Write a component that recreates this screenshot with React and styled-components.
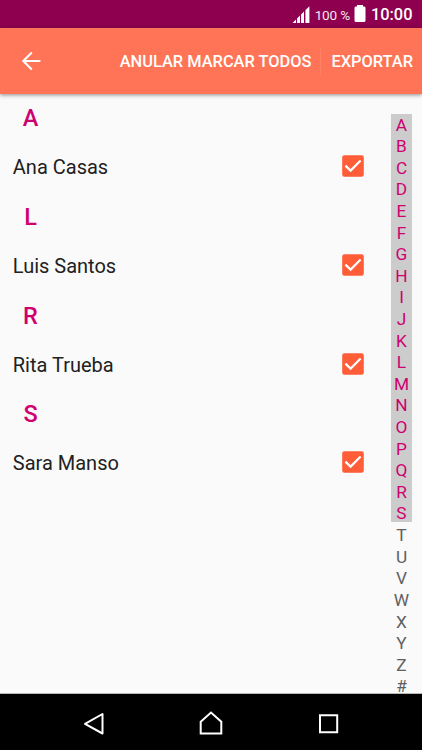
import React from "react";
import styled, { createGlobalStyle } from "styled-components";

const GlobalStyle = createGlobalStyle`
  * {
    box-sizing: border-box;
  }

  body {
    margin: 0;
    background: #fafafa;
    font-family: Roboto, sans-serif;
  }
`;

const Screen = styled.div`
  display: flex;
  flex-direction: column;
  width: 422px;
  height: 750px;
  overflow: hidden;
  background: #fafafa;
`;

const StatusBar = styled.div`
  display: flex;
  flex: none;
  align-items: center;
  justify-content: flex-end;
  height: 28px;
  padding-right: 9.5px;
  color: white;
  background: #8e004f;
`;

const Percent = styled.span`
  margin: 2px 4px 0 5px;
  font-size: 13.6px;
  line-height: 16px;
  letter-spacing: -0.2px;
  opacity: 0.9;
`;

const Clock = styled.span`
  margin: 2px 0 0 5px;
  font-size: 16.4px;
  font-weight: 500;
  line-height: 20px;
`;

const AppBar = styled.header`
  display: flex;
  flex: none;
  align-items: center;
  height: 66px;
  padding: 0 9px 0 20.5px;
  color: white;
  background: #ff7456;
  box-shadow: 0 1px 4px rgba(0, 0, 0, 0.45);
  z-index: 1;
`;

const BarButton = styled.button`
  padding: 2px 0 0;
  border: 0;
  color: inherit;
  background: none;
  font: 500 16.4px/20px Roboto, sans-serif;
  white-space: nowrap;
`;

const BackButton = styled(BarButton)`
  display: flex;
  margin-right: auto;
  padding: 0;
`;

const Divider = styled.div`
  width: 1px;
  height: 28px;
  margin: 0 10px 0 9px;
  background: #ff8166;
`;

const Content = styled.main`
  display: flex;
  flex: 1;
  min-height: 0;
  overflow: hidden;
  border-bottom: 1px solid #b8b8b8;
`;

const Contacts = styled.div`
  flex: 1;
`;

const Group = styled.section`
  height: 98.8px;
`;

const Letter = styled.h2`
  width: 61px;
  height: 48px;
  margin: 0;
  color: #cf0070;
  font-size: 23.5px;
  font-weight: 500;
  line-height: 48px;
  text-align: center;
`;

const Contact = styled.div`
  display: flex;
  align-items: center;
  justify-content: space-between;
  height: 49px;
  padding: 0 27px 0 12.8px;
  color: #212121;
  font-size: 20px;
`;

const Name = styled.span`
  padding-top: 1px;
  line-height: 24px;
`;

const Index = styled.nav`
  flex: none;
  width: 21px;
  margin: 19.5px 10px 0 0;
  color: #606060;
  background: linear-gradient(#cccccc 408.5px, transparent 408.5px);
`;

const IndexLetter = styled.div`
  height: 21.62px;
  color: ${(props) => (props.$active ? "#cf0070" : "inherit")};
  font-size: 17.3px;
  line-height: 22.5px;
  text-align: center;

  &:last-child {
    height: 17.3px;
  }
`;

const NavBar = styled.footer`
  display: flex;
  flex: none;
  align-items: center;
  justify-content: space-between;
  height: 56px;
  padding: 0 81px;
  background: black;
`;

const Signal = () => (
  <svg width="18" height="18" viewBox="0 0 18 18" fill="white">
    <path d="M0 18.5 4 14.6V18.5ZM5 13.6 8 10.6V18.5H5ZM9 9.6 12 6.6V18.5H9ZM13.4 5.2 17.4 1.2V18.5H13.4Z" />
  </svg>
);

const Battery = () => (
  <svg width="12" height="18" viewBox="0 0 12 18" fill="white">
    <path d="M3 0H9V1.5H10.5L11.5 2.5V16L10.5 17H1.5L.5 16V2.5L1.5 1.5H3Z" />
  </svg>
);

const BackArrow = () => (
  <svg width="20" height="20" viewBox="0 0 20 20" fill="none" stroke="white" strokeWidth="2.1">
    <path d="M10.8 1.6 2.3 10 10.8 18.4M2 10H19.4" />
  </svg>
);

const CheckIcon = styled.svg`
  margin-bottom: 1px;
`;

const Check = () => (
  <CheckIcon width="22" height="22" viewBox="0 0 22 22" fill="none">
    <rect x=".2" y=".2" width="21.6" height="21.6" rx="2.2" fill="#ff5c38" />
    <path d="M3.4 10.6 8.6 15.6 18.6 5.4" stroke="white" strokeWidth="2.2" />
  </CheckIcon>
);

const groups = [
  { letter: "A", name: "Ana Casas" },
  { letter: "L", name: "Luis Santos" },
  { letter: "R", name: "Rita Trueba" },
  { letter: "S", name: "Sara Manso" },
];

const letters = "ABCDEFGHIJKLMNOPQRSTUVWXYZ#".split("");

export default () => {
  return (
    <Screen>
      <GlobalStyle />
      <StatusBar>
        <Signal />
        <Percent>100 %</Percent>
        <Battery />
        <Clock>10:00</Clock>
      </StatusBar>
      <AppBar>
        <BackButton aria-label="Atrás">
          <BackArrow />
        </BackButton>
        <BarButton>ANULAR MARCAR TODOS</BarButton>
        <Divider />
        <BarButton>EXPORTAR</BarButton>
      </AppBar>
      <Content>
        <Contacts>
          {groups.map((group) => (
            <Group key={group.letter}>
              <Letter>{group.letter}</Letter>
              <Contact>
                <Name>{group.name}</Name>
                <Check />
              </Contact>
            </Group>
          ))}
        </Contacts>
        <Index>
          {letters.map((letter) => (
            <IndexLetter key={letter} $active={letter >= "A" && letter <= "S"}>
              {letter}
            </IndexLetter>
          ))}
        </Index>
      </Content>
      <NavBar>
        <svg width="26" height="26" viewBox="0 0 26 26" fill="none" stroke="white" strokeWidth="2">
          <path d="M4 14.9 21.5 5V24.5Z" strokeLinejoin="round" />
        </svg>
        <svg width="26" height="26" viewBox="0 0 26 26" fill="none" stroke="white" strokeWidth="2">
          <path d="M2.7 12.8 13 3.6 23.3 12.8V24.6H2.7Z" />
        </svg>
        <svg width="26" height="26" viewBox="0 0 26 26" fill="none" stroke="white" strokeWidth="2">
          <path d="M5 6.3H22.2V23.3H5Z" />
        </svg>
      </NavBar>
    </Screen>
  );
};
